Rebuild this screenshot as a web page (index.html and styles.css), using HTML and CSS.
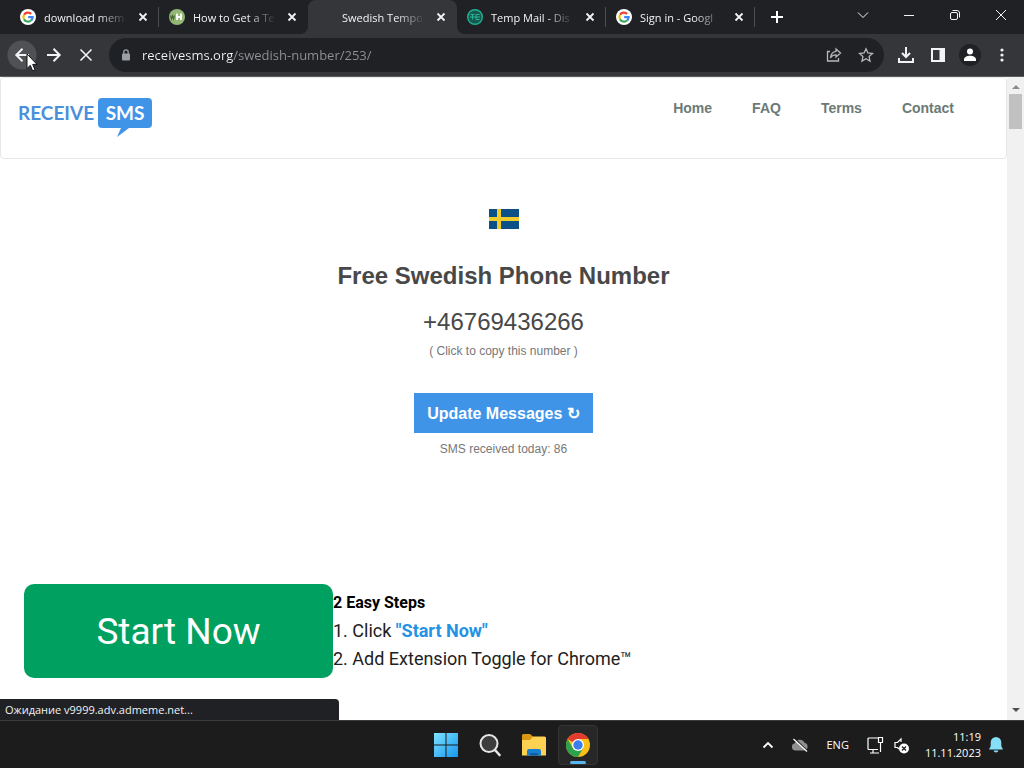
FILE: index.html
```html
<!DOCTYPE html>
<html lang="en">
<head>
  <meta charset="UTF-8">
  <title>Swedish Temporary Phone Number</title>
  <link rel="stylesheet" href="styles.css">
</head>
<body>
  <!-- shared shapes -->
  <svg class="defs" aria-hidden="true">
    <symbol id="x" viewBox="0 0 16 16"><path d="M4.5 4.5l7 7M11.5 4.5l-7 7" stroke="currentColor" stroke-width="1.8"/></symbol>
    <symbol id="google" viewBox="0 0 16 16">
      <circle cx="8" cy="8" r="8" fill="#fff"/>
      <g fill="none" stroke-width="2.2">
        <path d="M11.2 4.9A4.6 4.6 0 0 0 4 5.8" stroke="#ea4335"/>
        <path d="M4 5.8a4.6 4.6 0 0 0 0 4.4" stroke="#fbbc05"/>
        <path d="M4 10.2a4.6 4.6 0 0 0 7 1.3" stroke="#34a853"/>
        <path d="M11 11.5A4.6 4.6 0 0 0 12.6 8.2H8.2" stroke="#4285f4"/>
      </g>
    </symbol>
  </svg>

  <div class="tabstrip">
    <div class="tab">
      <svg class="favicon"><use href="#google"/></svg>
      <span class="tab-title">download mem</span>
      <button class="tab-close" aria-label="Close tab"><svg><use href="#x"/></svg></button>
    </div>
    <div class="tab no-line">
      <svg class="favicon" viewBox="0 0 16 16">
        <circle cx="8" cy="8" r="8" fill="#93b874"/>
        <path d="M1.500 6.500l1 3.500 1-3 1 3 1-3.500" fill="none" stroke="#4a6b35" stroke-width="1.2"/>
        <path d="M8 4.500v6.500M12 4.500v6.500M8 8h4" stroke="#fff" stroke-width="1.8"/>
      </svg>
      <span class="tab-title">How to Get a Te</span>
      <button class="tab-close" aria-label="Close tab"><svg><use href="#x"/></svg></button>
    </div>
    <div class="tab active">
      <span class="favicon"></span>
      <span class="tab-title">Swedish Tempo</span>
      <button class="tab-close" aria-label="Close tab"><svg><use href="#x"/></svg></button>
    </div>
    <div class="tab">
      <svg class="favicon" viewBox="0 0 16 16">
        <circle cx="8" cy="8" r="7.3" fill="#17594f" stroke="#1fb394" stroke-width="1.4"/>
        <path d="M3.5 5.5h4M5.5 5.5v5M3 8h10M9 5.5h3.5M9 5.5v5h3.5" fill="none" stroke="#2bb497"/>
      </svg>
      <span class="tab-title">Temp Mail - Dis</span>
      <button class="tab-close" aria-label="Close tab"><svg><use href="#x"/></svg></button>
    </div>
    <div class="tab">
      <svg class="favicon"><use href="#google"/></svg>
      <span class="tab-title">Sign in - Googl</span>
      <button class="tab-close" aria-label="Close tab"><svg><use href="#x"/></svg></button>
    </div>
    <button class="new-tab" aria-label="New tab"><svg viewBox="0 0 14 14"><path d="M7 1v12M1 7h12" stroke="#fff" stroke-width="2"/></svg></button>
    <div class="window-buttons">
      <button aria-label="Search tabs"><svg viewBox="0 0 12 12"><path d="M1 3.5l5 5 5-5"/></svg></button>
      <button aria-label="Minimize"><svg viewBox="0 0 12 12"><path d="M1 6.5h10"/></svg></button>
      <button aria-label="Restore"><svg viewBox="0 0 12 12"><rect x="1.5" y="3.5" width="7" height="7" rx="1.5"/><path d="M3.5 1.5h4.500a2.500 2.500 0 0 1 2.500 2.500v4.500"/></svg></button>
      <button aria-label="Close"><svg viewBox="0 0 12 12"><path d="M1 1l10 10M11 1L1 11"/></svg></button>
    </div>
  </div>

  <div class="toolbar">
    <button class="tool back" aria-label="Back"><svg viewBox="0 0 16 16"><path d="M15 8H2.500M8.500 1.800L2.300 8l6.200 6.200"/></svg></button>
    <button class="tool" aria-label="Forward"><svg viewBox="0 0 16 16"><path d="M1 8h12.500M7.500 1.800L13.700 8l-6.200 6.200"/></svg></button>
    <button class="tool thin" aria-label="Stop"><svg viewBox="0 0 16 16"><path d="M2.500 2.500l11 11M13.500 2.500l-11 11"/></svg></button>
    <div class="omnibox">
      <svg class="lock" viewBox="0 0 10 12"><rect x="1" y="4.500" width="8" height="7" rx="1" fill="#9aa0a6"/><path d="M2.800 5V3a2.200 2.200 0 0 1 4.400 0v2" fill="none" stroke="#9aa0a6" stroke-width="1.300"/></svg>
      <input class="url" type="text" aria-label="Address" value="receivesms.org/swedish-number/253/">
      <button class="tool dim" aria-label="Share"><svg viewBox="0 0 16 16"><path d="M4 4.500H1.500v9.500h11V11"/><path d="M10 2l4.500 4L10 10V7.800C7.500 7.800 5.500 8.800 4.500 11 4.800 7.500 6.500 4.800 10 4.300z"/></svg></button>
      <button class="tool dim" aria-label="Bookmark"><svg viewBox="0 0 16 16"><path d="M8 1.800l1.900 4.200 4.600.5-3.400 3.100.9 4.500L8 11.800l-4 2.300.9-4.500L1.500 6.500 6.100 6z"/></svg></button>
    </div>
    <button class="tool" aria-label="Downloads"><svg viewBox="0 0 16 16"><path d="M8 0v9.500M4 6l4 4 4-4M1 11v4h14v-4"/></svg></button>
    <button class="tool" aria-label="Side panel"><svg viewBox="0 0 16 16"><path d="M1 1h14v14H1zM3 3v10h6.500V3z" fill="#f1f3f4" fill-rule="evenodd" stroke="none"/></svg></button>
    <button class="tool" aria-label="Profile"><svg class="profile" viewBox="0 0 22 22"><circle cx="11" cy="11" r="11" fill="#202124"/><circle cx="11" cy="7.500" r="3" fill="#fff"/><path d="M5 17v-1.500c0-2.500 3-3.800 6-3.800s6 1.300 6 3.800V17z" fill="#fff"/></svg></button>
    <button class="tool" aria-label="Menu"><svg viewBox="0 0 16 16"><g fill="#f1f3f4" stroke="none"><circle cx="8" cy="3" r="1.600"/><circle cx="8" cy="8" r="1.600"/><circle cx="8" cy="13" r="1.600"/></g></svg></button>
  </div>

  <div class="viewport">
    <div class="page">
      <header class="navbar">
        <a class="logo" href="#">
          <span>RECEIVE</span>
          <span class="bubble">SMS<svg class="tail" viewBox="0 0 12 9"><path d="M4 0h8L0 9z" fill="#4094e8"/></svg></span>
        </a>
        <nav class="menu">
          <a href="#">Home</a>
          <a href="#">FAQ</a>
          <a href="#">Terms</a>
          <a href="#">Contact</a>
        </nav>
      </header>

      <main class="number">
        <svg class="flag" viewBox="0 0 30 20"><path d="M0 0h30v20H0z" fill="#0b5087"/><path d="M8 0h4v20H8zM0 8h30v4H0z" fill="#f0cb2c"/></svg>
        <h1>Free Swedish Phone Number</h1>
        <p class="phone">+46769436266</p>
        <p class="note">( Click to copy this number )</p>
        <button class="update">Update Messages ↻</button>
        <p class="note">SMS received today: 86</p>
      </main>

      <section class="promo">
        <button class="start">Start Now</button>
        <div class="steps">
          <h2>2 Easy Steps</h2>
          <p>1. Click <a href="#">"Start Now"</a></p>
          <p>2. Add Extension Toggle for Chrome™</p>
        </div>
      </section>
    </div>
    <div class="scrollbar">
      <svg viewBox="0 0 8 4"><path d="M0 4l4-4 4 4z" fill="#8b8b8b"/></svg>
      <div class="thumb"></div>
      <svg class="down" viewBox="0 0 8 4"><path d="M0 0l4 4 4-4z" fill="#505050"/></svg>
    </div>
    <div class="status">Ожидание v9999.adv.admeme.net...</div>
  </div>

  <div class="taskbar">
    <div class="apps">
      <button aria-label="Start"><svg viewBox="0 0 24 24">
        <defs><linearGradient id="win" x1="0" y1="0" x2="24" y2="24" gradientUnits="userSpaceOnUse"><stop stop-color="#7fe3ff"/><stop offset="1" stop-color="#1596ee"/></linearGradient></defs>
        <path d="M0 0h11.500v11.500H0zM12.500 0H24v11.500H12.500zM0 12.500h11.500V24H0zM12.500 12.500H24V24H12.500z" fill="url(#win)"/>
      </svg></button>
      <button aria-label="Search"><svg viewBox="0 0 24 24"><circle cx="11" cy="10.500" r="8.500" fill="#3d3d3d" stroke="#e6e6e6" stroke-width="2"/><path d="M17.500 17.500l4 4.500" stroke="#e6e6e6" stroke-width="2.600" stroke-linecap="round"/></svg></button>
      <button aria-label="File Explorer"><svg viewBox="0 0 24 24"><path d="M0 2.500Q0 1 1.500 1H8l3 2.500V8H0z" fill="#d99a12"/><path d="M0 7h8l3-3.500h11.500Q24 3.500 24 5v17.500H0z" fill="#fdd253"/><path d="M5 22.500V18q0-2 2-2h10q2 0 2 2v4.500z" fill="#1780d0"/><path d="M8 22.500v-2.500h8v2.500z" fill="#0c5fa8"/></svg></button>
      <button class="running" aria-label="Chrome"><svg viewBox="0 0 24 24">
        <circle cx="12" cy="12" r="12" fill="#fbc116"/>
        <path d="M12 12L1.600 6A12 12 0 0 1 22.400 6H12z" fill="#e33b2e"/>
        <path d="M1.600 6A12 12 0 0 0 12 24l5.200-9L12 12 6.800 15z" fill="#2da14c"/>
        <circle cx="12" cy="12" r="6" fill="#fff"/><circle cx="12" cy="12" r="4.700" fill="#3b7ded"/>
      </svg></button>
    </div>
    <div class="tray">
      <button class="tray-icon" aria-label="Show hidden icons"><svg viewBox="0 0 18 18"><path d="M4.500 11.500L9 7l4.500 4.500" stroke-width="1.800"/></svg></button>
      <svg class="cloud" viewBox="0 0 18 18"><path d="M4.500 14.500a3.700 3.700 0 0 1-.7-7.300 5.200 5.200 0 0 1 9.700-.4 4 4 0 0 1 .3 7.700z" fill="#8f8f8f" stroke="none"/><path d="M3.500 2.500l13 12.500" stroke="#1c1c1c"/><path d="M2.500 3l13.500 12.500"/></svg>
      <span class="lang">ENG</span>
      <svg viewBox="0 0 18 18"><path d="M12 2H3Q2 2 2 3v9.500q0 1 1 1h9M7 13.500V17M4 17h9M12.500 1.500h4v5h-4zM14.500 6.500V16"/></svg>
      <svg class="sound" viewBox="0 0 18 18"><path d="M9 6V3L5.500 6.500H3v5h2.500l1.500 1.500"/><circle cx="12" cy="12.500" r="5" fill="#fff" stroke="none"/><path d="M10 10.500l4 4M14 10.500l-4 4" stroke="#1c1c1c"/></svg>
      <div class="clock">11:19<br>11.11.2023</div>
      <svg class="bell" viewBox="0 0 16 18"><path d="M8 1a5.300 5.300 0 0 0-5.300 5.300V10L1 13.500h14L13.300 10V6.300A5.300 5.300 0 0 0 8 1zM5.500 14.500a2.600 2.600 0 0 0 5 0z" fill="#86dff7" stroke="none"/></svg>
    </div>
  </div>

  <svg class="cursor" viewBox="0 0 12 19"><path d="M1 1v14.500l3.300-3.200 2.300 5.500 2.400-1-2.300-5.400H11z" fill="#fff" stroke="#111"/></svg>
</body>
</html>
```
FILE: styles.css
```css
* {
  box-sizing: border-box;
}

body {
  margin: 0;
  height: 100vh;
  display: flex;
  flex-direction: column;
  position: relative;
  overflow: hidden;
  background: #fff;
  font-family: "Open Sans", "Noto Sans", sans-serif;
  font-size: 11px;
}

h1, h2, p {
  margin: 0;
}

a {
  text-decoration: none;
}

button {
  border: none;
  padding: 0;
  background: none;
  font-family: inherit;
  color: inherit;
  display: flex;
  align-items: center;
  justify-content: center;
}

svg {
  display: block;
}

.defs {
  position: absolute;
  width: 0;
  height: 0;
}

/* tabs */
.tabstrip {
  display: flex;
  height: 34px;
  padding-left: 10px;
  background: #202124;
  color: #f1f3f4;
}

.tab {
  display: flex;
  align-items: center;
  flex: 0 1 149px;
  min-width: 0;
  padding: 0 8px 0 10px;
  background: linear-gradient(#4a4c50, #4a4c50) right center / 1px 20px no-repeat;
}

.tab.no-line {
  background: none;
}

.tab.active {
  position: relative;
  background: #35363a;
  border-radius: 8px 8px 0 0;
}

/* curved feet of the active tab */
.tab.active::before,
.tab.active::after {
  content: "";
  position: absolute;
  bottom: 0;
  width: 8px;
  height: 8px;
}

.tab.active::before {
  right: 100%;
  background: radial-gradient(circle at 0 0, transparent 8px, #35363a 8px);
}

.tab.active::after {
  left: 100%;
  background: radial-gradient(circle at 100% 0, transparent 8px, #35363a 8px);
}

.favicon {
  flex: none;
  width: 16px;
  height: 16px;
  margin-right: 8px;
}

.tab-title {
  flex: 1;
  white-space: nowrap;
  -webkit-mask-image: linear-gradient(to right, #000 65%, transparent);
  mask-image: linear-gradient(to right, #000 65%, transparent);
}

.tab-close {
  margin-left: 8px;
}

.tab-close svg {
  width: 16px;
  height: 16px;
}

.new-tab {
  width: 28px;
  margin-left: 8px;
}

.new-tab svg {
  width: 14px;
  height: 14px;
}

.window-buttons {
  display: flex;
  height: 29px;
  margin-left: auto;
}

.window-buttons button {
  width: 46px;
}

.window-buttons svg {
  width: 12px;
  height: 12px;
  fill: none;
  stroke: #f1f3f4;
}

/* toolbar */
.toolbar {
  display: flex;
  align-items: center;
  height: 43px;
  padding: 0 6px;
  background: #35363a;
  border-bottom: 1px solid #5b5c60;
}

.tool {
  width: 32px;
  height: 32px;
}

.tool svg {
  width: 16px;
  height: 16px;
  fill: none;
  stroke: #f1f3f4;
  stroke-width: 2;
}

.tool.thin svg {
  stroke-width: 1.6;
}

.tool.back {
  background: radial-gradient(circle, #505154 14px, transparent 15px);
}

.tool.dim svg {
  stroke: #b5b8bb;
  stroke-width: 1.3;
}

.tool .profile {
  width: 22px;
  height: 22px;
  stroke: none;
}

.omnibox {
  flex: 1;
  display: flex;
  align-items: center;
  height: 34px;
  margin: 0 6px 0 7px;
  padding: 0 2px 0 12px;
  border-radius: 17px;
  background: #202124;
}

.lock {
  width: 10px;
  height: 12px;
  margin-right: 11px;
}

/* host name is bright, the path after it is grey */
.url {
  flex: 1;
  min-width: 0;
  padding: 0;
  border: none;
  outline: none;
  font-family: inherit;
  font-size: 13px;
  -webkit-text-fill-color: transparent;
  background: linear-gradient(to right, #f1f3f4 91px, #8f9398 91px);
  -webkit-background-clip: text;
  background-clip: text;
}

/* page */
.viewport {
  flex: 1;
  min-height: 0;
  display: flex;
  position: relative;
}

.page {
  flex: 1;
  overflow: hidden;
  font-family: "Liberation Sans", Arial, sans-serif;
}

.navbar {
  display: flex;
  justify-content: space-between;
  height: 82px;
  padding: 20px 52px 0 17px;
  border: 1px solid #e7e7e7;
  border-radius: 4px;
}

.logo {
  display: flex;
  align-items: flex-start;
  gap: 4px;
  color: #4a8fdc;
  font: bold 19px/30px Lato, sans-serif;
}

.bubble {
  position: relative;
  width: 54px;
  border-radius: 4px;
  background: #4094e8;
  color: #fff;
  text-align: center;
}

.tail {
  position: absolute;
  top: 100%;
  left: 19px;
  width: 12px;
  height: 9px;
}

.menu {
  display: flex;
  gap: 40px;
  font-size: 14px;
  font-weight: bold;
  line-height: 20px;
}

.menu a {
  color: #6c7a76;
}

.number {
  display: flex;
  flex-direction: column;
  align-items: center;
  padding-top: 50px;
  color: #484848;
}

.flag {
  width: 30px;
  height: 20px;
  margin-bottom: 32px;
}

.number h1 {
  font-size: 24px;
  line-height: 30px;
}

.phone {
  margin-top: 16px;
  font-size: 24px;
  line-height: 30px;
}

.note {
  margin-top: 6px;
  color: #777;
  font-size: 12px;
  line-height: 16px;
}

.update {
  height: 40px;
  margin: 34px 0 2px;
  padding: 0 13px;
  background: #4094e8;
  color: #fff;
  font-size: 16px;
  font-weight: bold;
}

.promo {
  display: flex;
  align-items: center;
  margin: 127px 0 0 24px;
  font-family: Roboto, sans-serif;
}

.start {
  width: 309px;
  height: 94px;
  border-radius: 10px;
  background: #00a060;
  color: #fff;
  font-size: 37px;
}

.steps {
  color: #212121;
  font-size: 18px;
  line-height: 28px;
}

.steps h2 {
  color: #000;
  font-size: 16px;
}

.steps a {
  color: #2492e6;
  font-weight: bold;
}

.scrollbar {
  display: flex;
  flex-direction: column;
  align-items: center;
  width: 17px;
  padding: 8px 0;
  background: #f1f1f1;
}

.scrollbar svg {
  width: 8px;
  height: 4px;
}

.thumb {
  width: 13px;
  height: 35px;
  margin-top: 5px;
  background: #c1c1c1;
}

.scrollbar .down {
  margin-top: auto;
}

.status {
  position: absolute;
  left: 0;
  bottom: 0;
  width: 339px;
  height: 21px;
  padding-left: 5px;
  border-radius: 0 4px 0 0;
  background: #202124;
  color: #f1f3f4;
  line-height: 21px;
}

/* taskbar */
.taskbar {
  display: grid;
  grid-template-columns: 1fr auto 1fr;
  align-items: center;
  height: 48px;
  border-top: 1px solid #3c3c3c;
  background: #1c1c1c;
  color: #fff;
}

.apps {
  grid-column: 2;
  display: flex;
  gap: 4px;
}

.apps button {
  position: relative;
  width: 40px;
  height: 40px;
}

.apps svg {
  width: 24px;
  height: 24px;
}

.apps .running {
  border: 1px solid #343434;
  border-radius: 4px;
  background: #272727;
}

.running::after {
  content: "";
  position: absolute;
  bottom: 0;
  width: 16px;
  height: 3px;
  border-radius: 2px;
  background: #56b4ee;
}

.tray {
  display: flex;
  align-items: center;
  justify-content: flex-end;
  padding-right: 20px;
}

.tray svg {
  width: 18px;
  height: 18px;
  fill: none;
  stroke: #fff;
  stroke-width: 1.2;
}

.tray .cloud {
  margin-left: 14px;
}

.lang {
  margin: 0 17px;
}

.tray .sound {
  margin-left: 8px;
}

.clock {
  margin-left: 15px;
  line-height: 16px;
  text-align: right;
}

.tray .bell {
  width: 16px;
  margin-left: 7px;
}

.cursor {
  position: absolute;
  left: 26px;
  top: 53px;
  width: 12px;
  height: 19px;
}
```
